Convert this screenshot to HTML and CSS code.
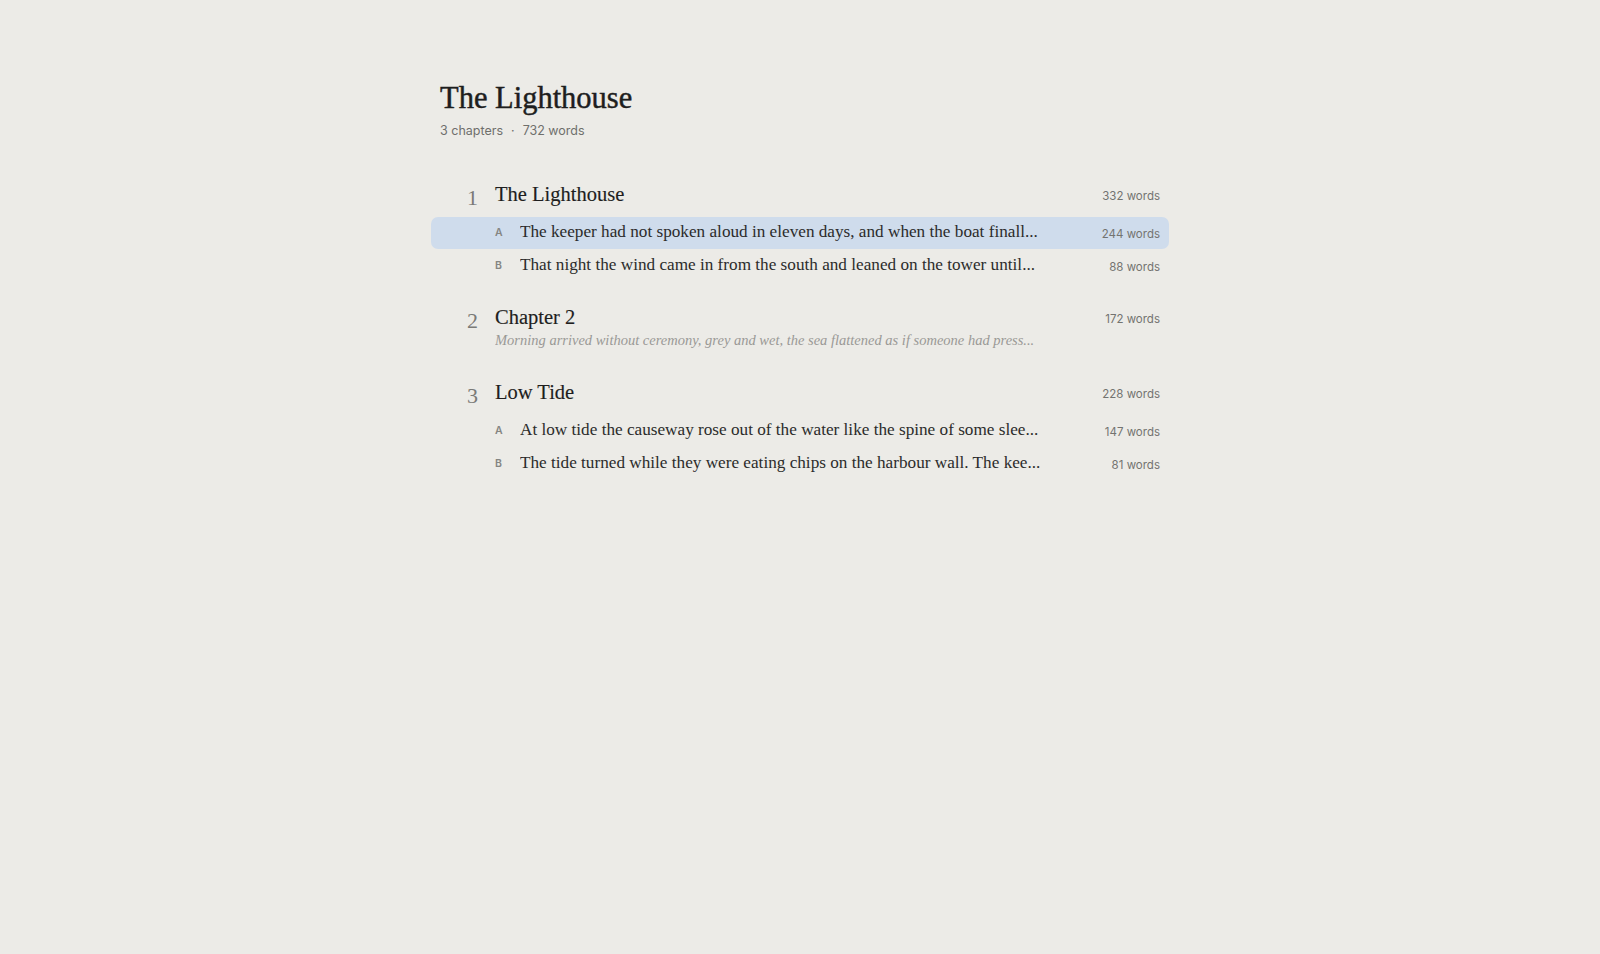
FILE: index.html
```html
<!DOCTYPE html>
<html lang="en">
<head>
<meta charset="utf-8">
<title>The Lighthouse</title>
<link rel="stylesheet" href="styles.css">
</head>
<body>
<main class="doc">
  <header class="doc-head">
    <h1 class="doc-title">The Lighthouse</h1>
    <div class="doc-meta"><span>3 chapters</span><span class="sep">·</span><span>732 words</span></div>
  </header>

  <section class="chapter">
    <div class="line chap-head">
      <span class="chap-num">1</span>
      <h2 class="chap-title">The Lighthouse</h2>
      <span class="count">332 words</span>
    </div>
    <div class="line para is-active">
      <span class="para-letter">A</span>
      <span class="para-text">The keeper had not spoken aloud in eleven days, and when the boat finall...</span>
      <span class="count">244 words</span>
    </div>
    <div class="line para">
      <span class="para-letter">B</span>
      <span class="para-text">That night the wind came in from the south and leaned on the tower until...</span>
      <span class="count">88 words</span>
    </div>
  </section>

  <section class="chapter">
    <div class="line chap-head">
      <span class="chap-num">2</span>
      <h2 class="chap-title">Chapter 2</h2>
      <span class="count">172 words</span>
    </div>
    <div class="line excerpt-line">
      <p class="excerpt">Morning arrived without ceremony, grey and wet, the sea flattened as if someone had press...</p>
    </div>
  </section>

  <section class="chapter">
    <div class="line chap-head">
      <span class="chap-num">3</span>
      <h2 class="chap-title">Low Tide</h2>
      <span class="count">228 words</span>
    </div>
    <div class="line para">
      <span class="para-letter">A</span>
      <span class="para-text">At low tide the causeway rose out of the water like the spine of some slee...</span>
      <span class="count">147 words</span>
    </div>
    <div class="line para">
      <span class="para-letter">B</span>
      <span class="para-text">The tide turned while they were eating chips on the harbour wall. The kee...</span>
      <span class="count">81 words</span>
    </div>
  </section>
</main>
</body>
</html>
```

FILE: styles.css
```css
* { box-sizing: border-box; }

html, body {
  margin: 0;
  padding: 0;
  background: #ecebe7;
}

body {
  font-family: "Liberation Serif", "Times New Roman", serif;
  color: #222;
}

.doc {
  width: 720px;
  margin: 0 auto;
  padding-top: 80px;
}

.doc-head {
  margin-bottom: 40px;
}

.doc-title {
  margin: 0;
  font-family: "Liberation Serif", serif;
  font-size: 30.5px;
  line-height: 37px;
  font-weight: normal;
  color: #1e1e1e;
  -webkit-text-stroke: 0.45px #1e1e1e;
}

.doc-meta {
  margin-top: 5px;
  font-family: Inter, "Liberation Sans", sans-serif;
  font-size: 12.5px;
  line-height: 18px;
  color: #6f6f6c;
}

.doc-meta .sep {
  margin: 0 8px;
}

.chapter {
  margin-bottom: 21px;
}

.line {
  display: grid;
  grid-template-columns: 55px 25px minmax(0, 1fr) 115px;
  align-items: center;
  margin: 0 -9px;
  padding: 0 9px;
}

.chap-head {
  height: 28px;
  margin-bottom: 9px;
}

.chap-num {
  grid-column: 1;
  align-self: start;
  height: 28px;
  padding-right: 17px;
  text-align: right;
  font-size: 22px;
  line-height: 36px;
  color: #7a7a77;
}

.chap-title {
  grid-column: 2 / 4;
  margin: 0;
  font-size: 20.5px;
  line-height: 28px;
  font-weight: normal;
  color: #1e1e1e;
  -webkit-text-stroke: 0.15px #1e1e1e;
}

.count {
  grid-column: 4;
  text-align: right;
  font-family: Inter, "Liberation Sans", sans-serif;
  font-size: 11.5px;
  color: #737370;
  white-space: nowrap;
}

.chap-head .count {
  padding-top: 4px;
}

.para .count {
  padding-top: 3px;
}

.para {
  height: 32px;
  margin-bottom: 1px;
  border-radius: 7px;
  padding-bottom: 2px;
}

.para.is-active {
  background: #cfdcec;
}

.para-letter {
  grid-column: 2;
  font-family: Inter, "Liberation Sans", sans-serif;
  font-size: 10.5px;
  font-weight: 600;
  color: #858582;
  padding-top: 1px;
}

.para-text {
  grid-column: 3;
  font-size: 17.2px;
  line-height: 30px;
  color: #2b2b2b;
  white-space: nowrap;
  overflow: hidden;
  text-overflow: ellipsis;
}

.chap-head + .excerpt-line {
  margin-top: -11.5px;
}

.excerpt-line {
  padding-bottom: 6.5px;
}

.excerpt {
  grid-column: 2 / 4;
  margin: 0;
  font-style: italic;
  font-size: 14.5px;
  line-height: 22px;
  color: #9a9996;
  white-space: nowrap;
  overflow: hidden;
  text-overflow: ellipsis;
}
```
